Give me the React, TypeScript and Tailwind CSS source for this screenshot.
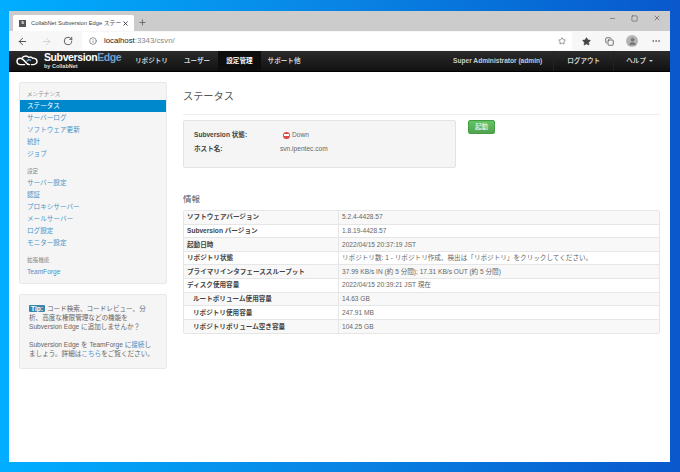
import React from 'react';
import { ArrowLeft, ArrowRight, RotateCw, Info, Star, X, Plus, Minus, Square, MoreHorizontal, User, Copy } from 'lucide-react';

const FONT = "font-['Liberation_Sans','Noto_Sans_CJK_JP',sans-serif]";

const maintenance = ['サーバーログ', 'ソフトウェア更新', '統計', 'ジョブ'];
const settings = ['サーバー設定', '認証', 'プロキシサーバー', 'メールサーバー', 'ログ設定', 'モニター設定'];

const rows = [
  { label: 'ソフトウェアバージョン', value: '5.2.4-4428.57' },
  { label: 'Subversion バージョン', value: '1.8.19-4428.57' },
  { label: '起動日時', value: '2022/04/15 20:37:19 JST' },
  { label: 'リポジトリ状態', value: 'リポジトリ数: 1 - リポジトリ作成、検出は「リポジトリ」をクリックしてください。' },
  { label: 'プライマリインタフェーススループット', value: '37.99 KB/s IN (約 5 分間); 17.31 KB/s OUT (約 5 分間)' },
  { label: 'ディスク使用容量', value: '2022/04/15 20:39:21 JST 現在' },
  { label: 'ルートボリューム使用容量', value: '14.63 GB', indent: true },
  { label: 'リポジトリ使用容量', value: '247.91 MB', indent: true },
  { label: 'リポジトリボリューム空き容量', value: '104.25 GB', indent: true },
];

function SideLink({ text }: { text: string }) {
  return <div className="h-3 pl-[7px] text-[6.6px] leading-3 text-[#4a93c8]">{text}</div>;
}

function SideHeader({ text }: { text: string }) {
  return <div className="h-3 pl-[7px] text-[5.6px] leading-3 text-[#8a8a8a]">{text}</div>;
}

function Logo() {
  return (
    <div className="flex items-center gap-[5px]">
      <svg width="24" height="14" viewBox="0 0 30 16" fill="none">
        <path d="M12 12.5H6.5a4 4 0 0 1 0-8c2.5 0 4 1.5 5.5 3.5s3 4.5 6 4.5" stroke="#ffffff" strokeWidth="1.8" strokeLinecap="round" />
        <path d="M9 4c1.5-2.5 6-3 8-.5 2-1 4-.5 5 1 3-.5 5.5 1.5 5.5 4s-2.5 4-5 4h-2" stroke="#ffffff" strokeWidth="1.8" strokeLinecap="round" />
        <path d="M15 8c1.5-1.5 3-2 4.5-1" stroke="#6fa8dc" strokeWidth="1.8" strokeLinecap="round" />
      </svg>
      <div className="flex flex-col">
        <div className="text-[10.5px] leading-[11px] font-bold tracking-[-0.4px] text-white">
          Subversion<span className="text-[#6f9fd0]">Edge</span>
        </div>
        <div className="text-[5.5px] leading-[7px] font-bold text-[#dddddd]">by CollabNet</div>
      </div>
    </div>
  );
}

export default function App() {
  return (
    <div className={`${FONT} h-[472px] w-[680px] overflow-hidden bg-gradient-to-r from-[#00aeff] via-[#0a84e4] to-[#0a58cc] pt-[11px] pr-[10px] pb-[10px] pl-[9px]`}>
      <div className="flex h-[451px] flex-col bg-white">
        {/* tab strip */}
        <div className="flex h-[20px] items-end bg-[#cccccc]">
          <div className="ml-[4px] flex h-[16px] w-[121px] items-center rounded-t-[2px] bg-white pr-[5px] pl-[6px]">
            <div className="mr-[5px] flex h-[7px] w-[7px] flex-none items-center justify-center bg-[#555555] text-[4px] font-bold leading-none text-white">S</div>
            <span className="flex-none text-[5.8px] whitespace-nowrap text-[#444444]">CollabNet Subversion Edge ステー</span>
            <X size={7} strokeWidth={3} className="ml-auto flex-none text-[#333333]" />
          </div>
          <Plus size={9} className="mb-[4px] ml-[4px] text-[#555555]" />
          <div className="mt-[3px] ml-auto flex items-center gap-[15px] self-start pr-[9px] text-[#555555]">
            <Minus size={7} />
            <Square size={7} />
            <X size={8} />
          </div>
        </div>
        {/* address bar */}
        <div className="flex h-[20px] items-center bg-[#f7f7f7]">
          <ArrowLeft size={11} className="ml-[8px] text-[#444444]" />
          <ArrowRight size={11} className="ml-[13px] text-[#d0d0d0]" />
          <RotateCw size={10} className="ml-[11px] text-[#444444]" />
          <div className="ml-[9px] flex h-[18px] flex-1 items-center bg-white pl-[7px]">
            <Info size={8} className="text-[#666666]" />
            <span className="ml-[7px] text-[7.8px] text-[#888888]"><span className="text-[#222222]">localhost</span>:3343/csvn/</span>
            <Star size={8} className="mr-[6px] ml-auto text-[#666666]" />
          </div>
          <div className="flex items-center pr-[9px] pl-[10px] text-[#444444]">
            <Star size={9} fill="#444444" />
            <Copy size={9} className="ml-[14px]" />
            <div className="ml-[12px] flex h-[12px] w-[12px] items-center justify-center rounded-full bg-[#b5b5b5]">
              <User size={9} fill="#777777" className="text-[#777777]" />
            </div>
            <MoreHorizontal size={10} className="ml-[13px] text-[#666666]" />
          </div>
        </div>
        {/* app nav */}
        <div className="flex h-[21px] items-center border-b border-[#000000] bg-gradient-to-b from-[#2c2c2c] to-[#111111] text-[6.6px] font-bold text-[#cccccc]">
          <div className="ml-[6px] w-[110px]"><Logo /></div>
          <div className="px-[10px] leading-[20px]">リポジトリ</div>
          <div className="px-[6px] leading-[20px]">ユーザー</div>
          <div className="ml-[2px] bg-[#0d0d0d] px-[8px] leading-[20px] text-white">設定管理</div>
          <div className="px-[7px] leading-[20px]">サポート他</div>
          <div className="ml-auto pr-[11px]">Super Administrator (admin)</div>
          <div className="border-x border-[#222222] px-[13px] leading-[20px]">ログアウト</div>
          <div className="flex items-center gap-[3px] pr-[17px] pl-[12px] leading-[20px]">
            ヘルプ
            <span className="h-0 w-0 border-x-[2px] border-t-[2px] border-x-transparent border-t-[#cccccc]" />
          </div>
        </div>
        {/* page */}
        <div className="flex flex-1 gap-[16px] pt-[10px] pl-[10px]">
          <div className="w-[148px] flex-none">
            <div className="h-[202px] rounded-[2px] border border-[#e8e8e8] bg-[#f5f5f5] pt-[5px]">
              <SideHeader text="メンテナンス" />
              <div className="h-3 bg-[#0088cc] pl-[7px] text-[6.6px] leading-3 text-white">ステータス</div>
              {maintenance.map((t) => <SideLink key={t} text={t} />)}
              <div className="h-[5px]" />
              <SideHeader text="設定" />
              {settings.map((t) => <SideLink key={t} text={t} />)}
              <div className="h-[5px]" />
              <SideHeader text="拡張機能" />
              <SideLink text="TeamForge" />
            </div>
            <div className="mt-[10px] h-[75px] rounded-[2px] border border-[#e8e8e8] bg-[#f5f5f5] pt-[9px] pl-[9px] text-[6.6px] leading-[9px] whitespace-nowrap text-[#666666]">
              <span className="mr-[2px] rounded-[1px] bg-[#3a87ad] px-[2px] font-bold text-white">Tip:</span>
              コード検索、コードレビュー、分<br />
              析、高度な権限管理などの機能を<br />
              Subversion Edge に追加しませんか？
              <div className="mt-[9px]">
                Subversion Edge を TeamForge に<span className="text-[#4a93c8]">接続</span>し<br />
                ましょう。詳細は<span className="text-[#4a93c8]">こちら</span>をご覧ください。
              </div>
            </div>
          </div>
          <div className="w-[477px] flex-none">
            <h1 className="h-[33px] border-b border-[#eeeeee] pt-[7px] text-[10.2px] leading-[16px] text-[#555555]">ステータス</h1>
            <div className="mt-[5px] flex items-start">
              <div className="h-[48px] w-[273px] rounded-[2px] border border-[#e3e3e3] bg-[#f5f5f5] pt-[7px] pl-[10px] text-[6.6px] text-[#666666]">
                <div className="flex h-[14px] items-center">
                  <span className="w-[87px] font-bold text-[#444444]">Subversion 状態:</span>
                  <span className="ml-[2px] flex h-[7px] w-[7px] items-center justify-center rounded-full bg-[#e04848]">
                    <span className="h-[2px] w-[5px] bg-white" />
                  </span>
                  <span className="ml-[2px]">Down</span>
                </div>
                <div className="flex h-[14px] items-center">
                  <span className="w-[86px] font-bold text-[#444444]">ホスト名:</span>
                  <span>svn.ipentec.com</span>
                </div>
              </div>
              <div className="ml-[12px] flex h-[14px] w-[27px] items-center justify-center rounded-[2px] border border-[#449d44] bg-gradient-to-b from-[#62c462] to-[#51a351] text-[6.6px] text-white">起動</div>
            </div>
            <h2 className="mt-[25px] h-[12px] text-[8.5px] leading-[12px] text-[#555555]">情報</h2>
            <table className="mt-[5px] w-full table-fixed border-separate border-spacing-0 overflow-hidden rounded-[2px] border border-[#e6e6e6] text-[6.6px] text-[#666666]">
              <tbody>
                {rows.map((r, i) => (
                  <tr key={r.label} className={i % 2 === 0 ? 'bg-[#f8f8f8]' : 'bg-white'}>
                    <td className={`h-[13.6px] w-[155px] border-r border-[#e6e6e6] font-bold text-[#444444] ${i < rows.length - 1 ? 'border-b' : ''} ${r.indent ? 'pl-[9px]' : 'pl-[3px]'}`}>{r.label}</td>
                    <td className={`h-[13.6px] border-[#e6e6e6] pl-[3px] ${i < rows.length - 1 ? 'border-b' : ''}`}>{r.value}</td>
                  </tr>
                ))}
              </tbody>
            </table>
          </div>
        </div>
      </div>
    </div>
  );
}
